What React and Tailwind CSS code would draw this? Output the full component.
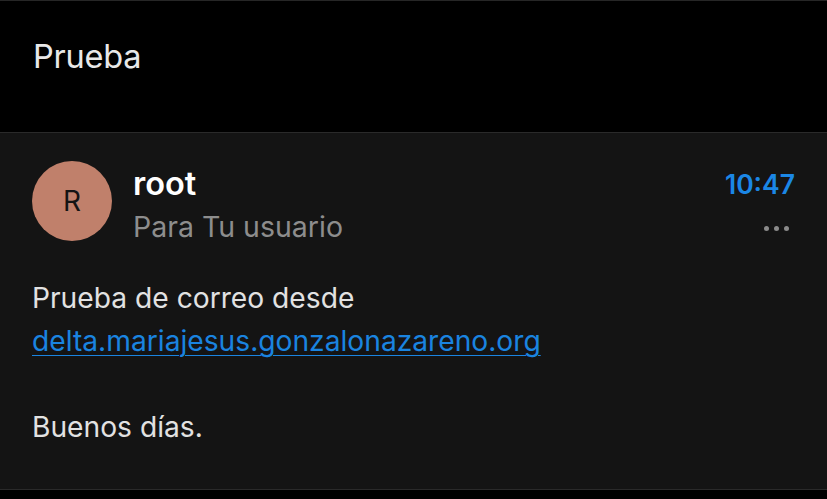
export default function App() {
  return (
    <div className="w-[827px] h-[499px] bg-black border-t border-[#262626] overflow-hidden" style={{ fontFamily: 'Inter, "Noto Sans", sans-serif' }}>
      <div className="h-[131px] flex items-start pt-[36px] px-[33px]">
        <span className="text-[32.5px] leading-[40px] text-[#e8e8e8] tracking-[-0.2px]">Prueba</span>
      </div>
      <div className="h-[358px] bg-[#141414] border-t border-b border-[#2a2a2a] px-[32px] pt-[28px]">
        <div className="flex items-start">
          <div className="w-[80px] h-[80px] rounded-full bg-[#c0806b] flex items-center justify-center text-[28px] text-[#141414] shrink-0">R</div>
          <div className="ml-[21px] flex-1 flex flex-col">
            <span className="text-[32.5px] font-semibold text-white leading-[40px] mt-[3px]">root</span>
            <span className="text-[28.5px] text-[#8d8d8d] leading-[40px] mt-[3px]">Para Tu usuario</span>
          </div>
          <div className="flex flex-col items-end">
            <span className="text-[26.5px] font-semibold text-[#1b87e6] leading-[40px] mt-[3px]">10:47</span>
            <div className="flex gap-[5px] mt-[22px] mr-[6px]">
              <span className="w-[5px] h-[5px] rounded-full bg-[#8a8a8a]" />
              <span className="w-[5px] h-[5px] rounded-full bg-[#8a8a8a]" />
              <span className="w-[5px] h-[5px] rounded-full bg-[#8a8a8a]" />
            </div>
          </div>
        </div>
        <div className="mt-[30px] text-[28.2px] leading-[43px] text-[#e2e2e2]">
          <div>Prueba de correo desde</div>
          <div><a className="text-[#1a84e0] underline decoration-1 underline-offset-[4px]">delta.mariajesus.gonzalonazareno.org</a></div>
          <div className="h-[43px]" />
          <div>Buenos días.</div>
        </div>
      </div>
    </div>
  );
}
